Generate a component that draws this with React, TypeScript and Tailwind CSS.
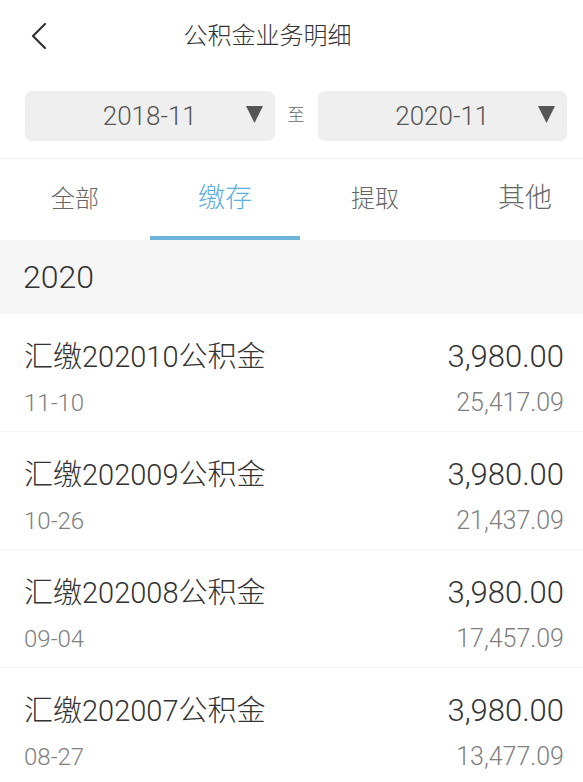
import { useState } from "react";

interface Record {
  id: string;
  title: string;
  date: string;
  amount: string;
  balance: string;
}

const TABS = [
  { key: "all", label: "全部", size: "text-[24px]" },
  { key: "deposit", label: "缴存", size: "text-[27px]" },
  { key: "withdraw", label: "提取", size: "text-[24px]" },
  { key: "other", label: "其他", size: "text-[27px]" },
];

const RECORDS: Record[] = [
  { id: "1", title: "汇缴202010公积金", date: "11-10", amount: "3,980.00", balance: "25,417.09" },
  { id: "2", title: "汇缴202009公积金", date: "10-26", amount: "3,980.00", balance: "21,437.09" },
  { id: "3", title: "汇缴202008公积金", date: "09-04", amount: "3,980.00", balance: "17,457.09" },
  { id: "4", title: "汇缴202007公积金", date: "08-27", amount: "3,980.00", balance: "13,477.09" },
];

function DateBox({ value }: { value: string }) {
  return (
    <div className="relative flex h-[50px] flex-1 items-center justify-center rounded-[7px] bg-[#efefef]">
      <span className="text-[26px] leading-none text-[#555]">{value}</span>
      <svg className="absolute right-[12px] top-[15px]" width="17" height="17" viewBox="0 0 17 17">
        <polygon points="0,0 17,0 8.5,17" fill="#555" />
      </svg>
    </div>
  );
}

export default function App() {
  const [tab, setTab] = useState("deposit");

  return (
    <div className="h-[782px] w-[583px] overflow-hidden bg-white font-['Roboto','Noto_Sans_CJK_SC',sans-serif] font-light">
      <div className="flex h-[72px] items-center">
        <div className="w-[77px] pl-[31px]">
          <svg width="16" height="28" viewBox="0 0 16 28">
            <polyline points="14,2 2,14 14,26" fill="none" stroke="#333" strokeWidth="2.2" strokeLinecap="round" strokeLinejoin="round" />
          </svg>
        </div>
        <div className="flex-1 text-center text-[24px] text-[#333]">公积金业务明细</div>
        <div className="w-[125px]" />
      </div>

      <div className="flex items-center border-b border-[#f1f1f1] pb-[17px] pl-[25px] pr-[16px] pt-[19px]">
        <DateBox value="2018-11" />
        <span className="w-[43px] text-center text-[17px] text-[#666]">至</span>
        <DateBox value="2020-11" />
      </div>

      <div className="flex h-[81px] overflow-hidden">
        {TABS.map((t) => (
          <button
            key={t.key}
            onClick={() => setTab(t.key)}
            className={`flex h-full w-[150px] shrink-0 items-center justify-center border-b-[4px] pt-[2px] ${t.size} ${
              tab === t.key ? "border-[#6cb4da] text-[#5eaedb]" : "border-transparent text-[#666]"
            }`}
          >
            {t.label}
          </button>
        ))}
      </div>

      <div className="flex h-[74px] items-center bg-[#f6f6f7] px-[23px] text-[32px] text-[#333]">2020</div>

      {RECORDS.map((r) => (
        <div key={r.id} className="flex h-[118px] justify-between border-b border-[#f3f3f3] pl-[24px] pr-[19px] pt-[25px]">
          <div>
            <div className="text-[29px] leading-[36px] text-[#333]">{r.title}</div>
            <div className="mt-[13px] text-[24px] leading-[30px] text-[#808080]">{r.date}</div>
          </div>
          <div className="text-right">
            <div className="text-[31px] leading-[36px] text-[#333]">{r.amount}</div>
            <div className="mt-[13px] text-[25px] leading-[30px] text-[#808080]">{r.balance}</div>
          </div>
        </div>
      ))}
    </div>
  );
}
